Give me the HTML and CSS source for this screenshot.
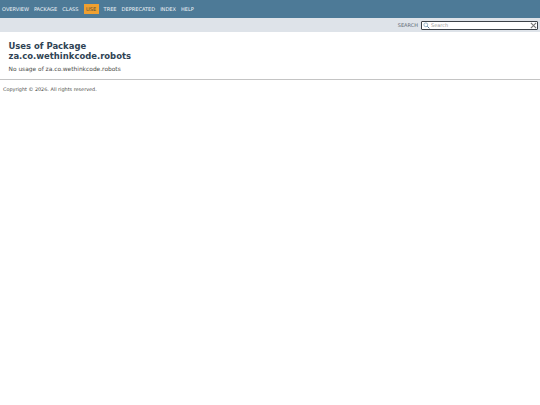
FILE: index.html
```html
<!DOCTYPE html>
<html lang="en">
<head>
<meta charset="utf-8">
<title>Uses of Package za.co.wethinkcode.robots</title>
<link rel="stylesheet" href="styles.css">
</head>
<body>
<header class="top-nav">
  <ul class="nav-list">
    <li><a href="#">OVERVIEW</a></li>
    <li><a href="#">PACKAGE</a></li>
    <li><a href="#">CLASS</a></li>
    <li class="active">USE</li>
    <li><a href="#">TREE</a></li>
    <li><a href="#">DEPRECATED</a></li>
    <li><a href="#">INDEX</a></li>
    <li><a href="#">HELP</a></li>
  </ul>
</header>
<div class="sub-nav">
  <label class="search-label" for="search">SEARCH</label>
  <div class="search-box">
    <svg class="search-icon" viewBox="0 0 8 8" aria-hidden="true"><circle cx="3.2" cy="3.2" r="2.2" fill="none" stroke="#7fa3bb" stroke-width="0.9"/><path d="M4.9 4.9 7.3 7.3" stroke="#5b7f99" stroke-width="1.1"/></svg>
    <input id="search" class="search-input" type="text" placeholder="Search">
    <svg class="reset-icon" viewBox="0 0 8 8" aria-hidden="true"><path d="M1 1 7 7M7 1 1 7" stroke="#777" stroke-width="1.3"/></svg>
  </div>
</div>
<main class="content">
  <h1 class="title">Uses of Package<br>za.co.wethinkcode.robots</h1>
  <p class="usage">No usage of za.co.wethinkcode.robots</p>
</main>
<footer class="legal">
  <p class="copy">Copyright © 2026. All rights reserved.</p>
</footer>
</body>
</html>
```
FILE: styles.css
```css
html, body {
  margin: 0;
  padding: 0;
  background: #fff;
  font-family: "DejaVu Sans", sans-serif;
  color: #4a4c48;
}
.top-nav {
  height: 18px;
  background: #4d7a97;
  box-sizing: border-box;
}
.nav-list {
  display: flex;
  align-items: flex-start;
  margin: 0;
  padding: 4px 0 0 2px;
  gap: 5px;
  list-style: none;
  font-size: 5.05px;
  line-height: 10px;
  color: #f0f4f7;
}
.nav-list a {
  color: #f0f4f7;
  text-decoration: none;
}
.active {
  background: #f0a030;
  color: #4a4a3c;
  padding: 0 2.5px;
}
.sub-nav {
  height: 14px;
  background: #dee3e9;
  display: flex;
  align-items: center;
  justify-content: flex-end;
  gap: 3px;
  padding-right: 2px;
  box-sizing: border-box;
}
.search-label {
  font-size: 5px;
  color: #5f6a75;
}
.search-box {
  display: flex;
  align-items: center;
  width: 115px;
  height: 7px;
  background: #fff;
  border: 1px solid #3c4248;
  border-radius: 1px;
}
.search-icon {
  width: 7px;
  height: 7px;
  margin-left: 1px;
  flex: none;
}
.search-input {
  flex: 1;
  min-width: 0;
  border: 0;
  padding: 0 0 0 1px;
  height: 7px;
  font: 5px "DejaVu Sans", sans-serif;
  background: transparent;
  outline: none;
}
.search-input::placeholder {
  color: #999;
  opacity: 1;
}
.reset-icon {
  width: 7px;
  height: 7px;
  flex: none;
}
.content {
  padding: 9px 8px 0 8.5px;
}
.title {
  margin: 0;
  font-size: 8.45px;
  line-height: 10px;
  font-weight: bold;
  color: #2f4354;
}
.usage {
  margin: 5px 0 0;
  font-size: 5.9px;
  line-height: 7px;
}
.legal {
  margin-top: 6px;
  border-top: 1px solid #c4c4c4;
  padding: 6px 3px 0;
}
.copy {
  margin: 0;
  font-size: 4.9px;
  line-height: 7px;
}
```
